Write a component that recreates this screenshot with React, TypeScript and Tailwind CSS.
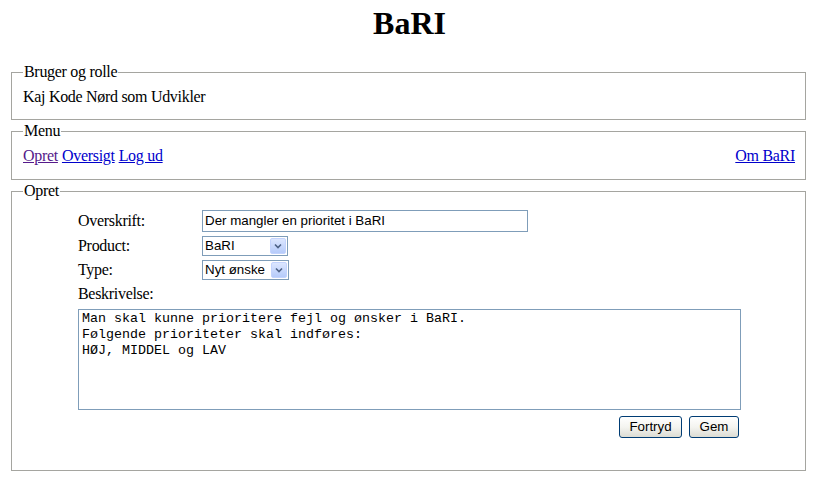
import React from "react";

const serif = "font-['Liberation_Serif',_'Times_New_Roman',_serif]";
const sans = "font-['Liberation_Sans',_Arial,_sans-serif]";

function ComboBox({ value, width }: { value: string; width: string }) {
  return (
    <div
      className={`flex h-[20px] items-center justify-between border border-[#7f9db9] bg-white pl-[2px] pr-[1px] text-[13.33px] leading-[16px] tracking-normal text-black ${sans} ${width}`}
    >
      <span>{value}</span>
      <span className="flex h-[16px] w-[16px] items-center justify-center rounded-[2px] border border-[#c3d3fd] bg-gradient-to-b from-[#dce6fe] to-[#b6cbfa]">
        <svg width="8" height="6" viewBox="0 0 8 6">
          <path d="M1 1.5 L4 4.5 L7 1.5" fill="none" stroke="#4d6185" strokeWidth="1.6" />
        </svg>
      </span>
    </div>
  );
}

function XpButton({ children, width }: { children: React.ReactNode; width: string }) {
  return (
    <button
      className={`h-[22px] rounded-[3px] border border-[#003c74] bg-gradient-to-b from-white via-[#f4f4f0] to-[#dcdcd3] text-[13.33px] leading-[16px] tracking-normal text-black ${sans} ${width}`}
    >
      {children}
    </button>
  );
}

export default function App() {
  return (
    <div className={`min-h-[488px] bg-white text-black ${serif}`}>
      <h1 className="mt-[5px] text-center text-[32px] font-bold leading-[37px]">BaRI</h1>

      <div className="pl-[11px] pr-[13px] tracking-[-0.3px]">
        <fieldset className="mt-[21px] border border-[#a5a5a0] pb-[13px] pl-[11px] pr-[11px]">
          <legend className="px-[1px] text-[16px] leading-[18px]">Bruger og rolle</legend>
          <div className="pt-[7px] text-[16px] leading-[18px]">Kaj Kode Nørd som Udvikler</div>
        </fieldset>

        <fieldset className="mt-[2px] border border-[#a5a5a0] pb-[14px] pl-[11px] pr-[10px]">
          <legend className="px-[1px] text-[16px] leading-[18px]">Menu</legend>
          <div className="flex justify-between pt-[7px] text-[16px] leading-[18px]">
            <div className="flex gap-[4px]">
              <a href="#" className="text-[#551a8b] underline">Opret</a>
              <a href="#" className="text-[#0000cc] underline">Oversigt</a>
              <a href="#" className="text-[#0000cc] underline">Log ud</a>
            </div>
            <a href="#" className="text-[#0000cc] underline">Om BaRI</a>
          </div>
        </fieldset>

        <fieldset className="mt-[2px] border border-[#a5a5a0] pb-[32px] pl-[11px] pr-[11px]">
          <legend className="px-[1px] text-[16px] leading-[18px]">Opret</legend>
          <div className="ml-[55px] w-[663px] text-[16px] leading-[18px]">
            <div className="mt-[10px] flex h-[22px] items-center">
              <span className="w-[124px]">Overskrift:</span>
              <div
                className={`flex h-[22px] w-[326px] items-center border border-[#7f9db9] pl-[2px] text-[13.33px] tracking-normal ${sans}`}
              >
                Der mangler en prioritet i BaRI
              </div>
            </div>
            <div className="mt-[4px] flex h-[20px] items-center">
              <span className="w-[124px]">Product:</span>
              <ComboBox value="BaRI" width="w-[86px]" />
            </div>
            <div className="mt-[4px] flex h-[20px] items-center">
              <span className="w-[124px]">Type:</span>
              <ComboBox value="Nyt ønske" width="w-[87px]" />
            </div>
            <div className="mt-[5px]">Beskrivelse:</div>
            <div
              className={`mt-[6px] h-[101px] whitespace-pre border border-[#7f9db9] pl-[3px] pt-[1px] text-[13.33px] leading-[16px] tracking-normal font-['Liberation_Mono',_'Courier_New',_monospace]`}
            >
              {"Man skal kunne prioritere fejl og ønsker i BaRI.\nFølgende prioriteter skal indføres:\nHØJ, MIDDEL og LAV"}
            </div>
            <div className="mt-[6px] flex justify-end gap-[7px] pr-[2px]">
              <XpButton width="w-[63px]">Fortryd</XpButton>
              <XpButton width="w-[50px]">Gem</XpButton>
            </div>
          </div>
        </fieldset>
      </div>
    </div>
  );
}
